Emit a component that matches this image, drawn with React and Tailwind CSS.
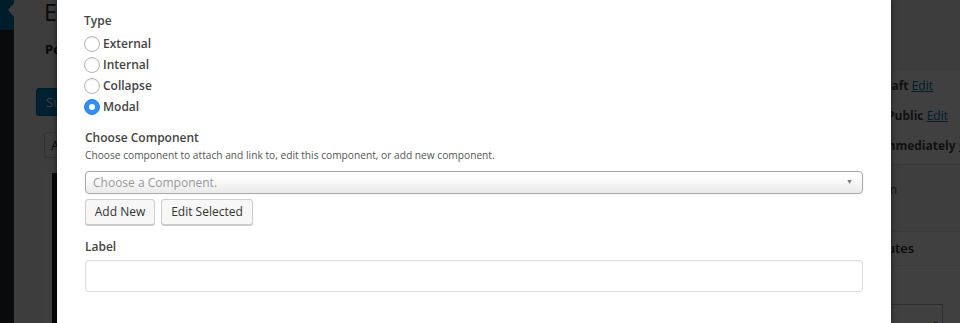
import React, { useState } from 'react';

const font = { fontFamily: '"Open Sans", "Liberation Sans", sans-serif' };

// fond : écran d'édition WordPress, assombri par la modale
const AdminBackdrop = () => (
    <div className="absolute inset-0 flex bg-[#f1f1f1]">
        {/* menu latéral */}
        <div className="w-[14px] shrink-0 bg-[#23282d] flex flex-col">
            <div className="relative h-[30px] bg-[#0073aa]">
                <span className="absolute right-0 top-[3px] w-0 h-0 border-y-[7px] border-y-transparent border-r-[6px] border-r-[#f1f1f1]"></span>
            </div>
        </div>

        {/* colonne principale */}
        <div className="flex-1 flex flex-col pl-[22px] text-[#23282d]">
            <div className="pl-[8px] text-[23px] leading-[24px] text-[#23282d]">Edit Page</div>
            <div className="pl-[9px] mt-[16px] text-[13px] font-bold">Permalink:</div>
            <div className="mt-[28px] w-[70px] h-[28px] rounded-[3px] bg-[#0085ba] border border-[#006799] text-white text-[13px] leading-[26px] pl-[9px]">Submit</div>
            <div className="ml-[8px] mt-[16px] w-[90px] h-[26px] rounded-[3px] bg-[#f7f7f7] border border-[#ccc] text-[13px] leading-[24px] pl-[6px]">Add Media</div>
            <div className="ml-[8px] mt-[15px] flex-1 bg-[#1e1e1e] border-l-[8px] border-[#f5f5f5]"></div>
        </div>

        {/* colonne de droite : Publish / Attributes */}
        <div className="w-[280px] shrink-0 flex flex-col bg-[#f1f1f1] overflow-hidden">
            <div className="h-[71px] shrink-0"></div>
            <div className="bg-white flex flex-col shrink-0 text-[12px] text-[#444]">
                <div className="flex justify-end whitespace-nowrap pr-[27px] h-[30px] items-center">
                    <span>Status: <b>Draft</b> <span className="text-[#0073aa] underline">Edit</span></span>
                </div>
                <div className="flex justify-end whitespace-nowrap pr-[12px] h-[30px] items-center">
                    <span>Visibility: <b>Public</b> <span className="text-[#0073aa] underline">Edit</span></span>
                </div>
                <div className="flex justify-end whitespace-nowrap -mr-[20px] h-[30px] items-center">
                    <span>Publish <b>immediately</b> <span className="text-[#0073aa] underline">Edit</span></span>
                </div>
                <div className="h-[4px] border-b border-[#ddd]"></div>
                <div className="h-[67px] bg-[#f5f5f5] border-b border-[#ddd] flex justify-end whitespace-nowrap pr-[63px] pt-[16px]">
                    <span className="text-[#555]">Save &amp; Return</span>
                </div>
            </div>
            <div className="bg-white flex flex-col shrink-0">
                <div className="h-[34px] border-b border-[#eee] flex justify-end items-center whitespace-nowrap pr-[46px] text-[13px] font-semibold text-[#23282d]">
                    Page Attributes
                </div>
                <div className="h-[38px]"></div>
                <div className="flex justify-end pr-[17px]">
                    <div className="w-[200px] h-[28px] border border-[#bbb] bg-white flex items-end justify-end pr-[3px] pb-[2px] text-[7px] text-[#555]">
                        <span>▼</span>
                    </div>
                </div>
            </div>
        </div>
    </div>
);

const Radio = ({ label, checked, onChange }) => (
    <label className="flex items-center h-[21px] cursor-pointer">
        {checked ? (
            <span className="w-[16px] h-[16px] rounded-full bg-[#2f8df3] border border-[#2a82e0] flex items-center justify-center">
                <span className="w-[6px] h-[6px] rounded-full bg-white"></span>
            </span>
        ) : (
            <span className="w-[16px] h-[16px] rounded-full bg-white border border-[#b4b4b4] shadow-[inset_0_1px_2px_rgba(0,0,0,0.08)]"></span>
        )}
        <input type="radio" className="hidden" checked={checked} onChange={onChange} />
        <span className="ml-[3px] text-[12px] font-semibold text-[#444]">{label}</span>
    </label>
);

const App = () => {
    const [type, setType] = useState('Modal');
    const types = ['External', 'Internal', 'Collapse', 'Modal'];

    return (
        <div className="relative w-[960px] h-[323px] overflow-hidden" style={font}>
            <AdminBackdrop />
            <div className="absolute inset-0 bg-black/75"></div>

            {/* modale */}
            <div className="absolute top-0 bottom-0 left-[57px] w-[834px] bg-white shadow-[0_0_6px_rgba(0,0,0,0.6)] pl-[27px] pr-[28px] flex flex-col">
                <div className="mt-[12px] text-[12px] font-semibold text-[#444] leading-[18px]">Type</div>
                <div className="mt-[3px] flex flex-col">
                    {types.map(t => (
                        <Radio key={t} label={t} checked={type === t} onChange={() => setType(t)} />
                    ))}
                </div>

                <div className="mt-[12px] ml-[1px] text-[12px] font-semibold text-[#444] leading-[18px]">Choose Component</div>
                <div className="ml-[1px] text-[10.2px] text-[#555] leading-[16px]">Choose component to attach and link to, edit this component, or add new component.</div>

                <div className="mt-[8px] ml-[1px] h-[23px] rounded-[4px] border border-[#aaa] bg-gradient-to-b from-white from-[20%] to-[#eaeaea] flex items-center justify-between pl-[7px] pr-[9px] shadow-[0_0_2px_rgba(0,0,0,0.1)]">
                    <span className="text-[12px] text-[#999]">Choose a Component.</span>
                    <span className="text-[7px] text-[#777]">▼</span>
                </div>

                <div className="mt-[5px] ml-[1px] flex gap-[6px]">
                    <button className="h-[26px] w-[70px] rounded-[3px] border border-[#ccc] bg-[#f7f7f7] shadow-[0_1px_0_#ccc] text-[12px] text-[#333]">Add New</button>
                    <button className="h-[26px] w-[92px] rounded-[3px] border border-[#ccc] bg-[#f7f7f7] shadow-[0_1px_0_#ccc] text-[12px] text-[#333]">Edit Selected</button>
                </div>

                <div className="mt-[13px] ml-[1px] text-[12px] font-semibold text-[#444] leading-[18px]">Label</div>
                <input type="text" className="mt-[4px] ml-[1px] h-[32px] rounded-[3px] border border-[#ddd] bg-white shadow-[inset_0_1px_2px_rgba(0,0,0,0.04)] outline-none px-[8px] text-[12px]" />
            </div>
        </div>
    );
};

export default App;
